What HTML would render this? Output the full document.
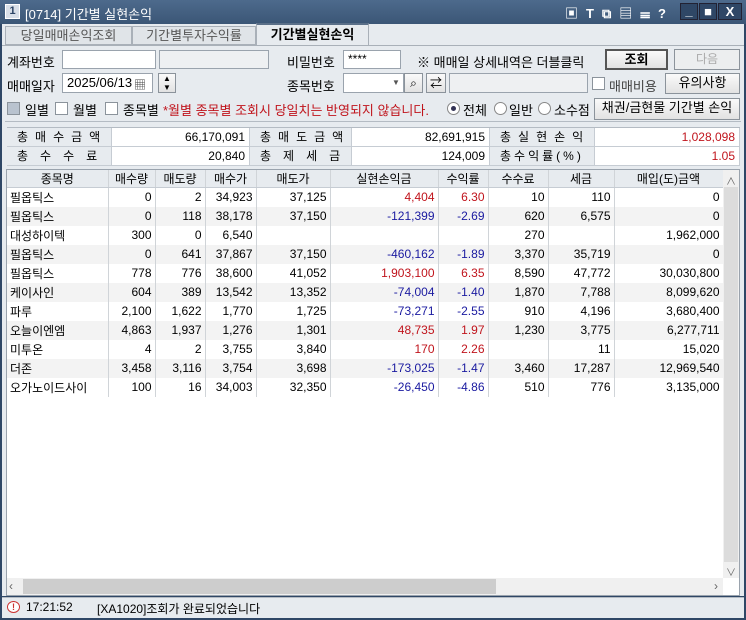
<!DOCTYPE html>
<html><head><meta charset="utf-8"><style>
*{box-sizing:border-box;margin:0;padding:0}
body{width:746px;height:620px;overflow:hidden;background:#2f4766;font-family:"Liberation Sans","Noto Sans CJK KR",sans-serif;font-size:12px;color:#000;position:relative}
.a{position:absolute;white-space:nowrap}
#title{left:0;top:0;width:746px;height:24px;background:linear-gradient(#4d6a8c,#3b5676);color:#fff;font-size:13px}
#main{left:2px;top:24px;width:742px;height:572px;background:#e7ebef}
.box{position:absolute;background:#fff;border:1px solid #9aa3ad}
.btn{position:absolute;background:linear-gradient(#fafafa,#e2e2e2);border:1px solid #8b939b;text-align:center;line-height:18px}
.cb{position:absolute;width:13px;height:13px;background:#fff;border:1px solid #8b939b}
.sum{position:absolute;height:19px;line-height:18px;border-right:1px solid #c6ccd3;border-bottom:1px solid #c6ccd3}
.lab{background:#e7ebef;letter-spacing:7px;padding-left:10px}
.val{background:#fff;text-align:right;padding-right:4px}
table{border-collapse:collapse;position:absolute;left:7px;top:170px;table-layout:fixed}
td,th{height:19px;border-right:1px solid #d0d4d8;padding:0 3px;font-weight:normal;font-size:12px;text-align:right;white-space:nowrap;overflow:hidden}
th{background:#e7ebef;text-align:center;height:17px;border-bottom:1px solid #c6ccd3}
td:first-child{text-align:left}
td{background:#fff}
tr.g td{background:#f3f3f3}
.r{color:#c0141c}.b{color:#1a1aa0}
</style></head><body>
<div id="title" class="a">
<div class="a" style="left:5px;top:4px;width:15px;height:15px;background:#d8dfe8;border:1px solid #fff;color:#2c4566;font-size:11px;text-align:center;line-height:13px;font-weight:bold">1</div>
<div class="a" style="left:25px;top:4px">[0714] 기간별 실현손익</div>
<div class="a" style="left:565px;top:3px;font-size:13px;font-weight:bold;letter-spacing:8px">▣T⧉▤☰?</div>
<div class="a" style="left:680px;top:3px;width:18px;height:17px;border:1px solid #223;background:#2f4766;color:#fff;text-align:center;font-weight:bold;line-height:14px">_</div>
<div class="a" style="left:699px;top:3px;width:18px;height:17px;border:1px solid #223;background:#2f4766;color:#fff;text-align:center;line-height:15px">■</div>
<div class="a" style="left:718px;top:3px;width:24px;height:17px;border:1px solid #223;background:#2f4766;color:#fff;text-align:center;font-weight:bold;line-height:15px">X</div>
</div>
<div id="main" class="a">
<div class="a" style="left:3px;top:2px;width:127px;height:19px;border:1px solid #a9b0b8;background:#e0e4e8;color:#555;text-align:center;line-height:18px;font-size:13px">당일매매손익조회</div>
<div class="a" style="left:130px;top:2px;width:124px;height:19px;border:1px solid #a9b0b8;background:#e0e4e8;color:#555;text-align:center;line-height:18px;font-size:13px">기간별투자수익률</div>
<div class="a" style="left:254px;top:-1px;width:113px;height:23px;border:1px solid #a9b0b8;border-top:2px solid #5a6f88;border-bottom:none;background:#e7ebef;text-align:center;line-height:20px;font-weight:bold;font-size:13px">기간별실현손익</div>
<div class="a" style="left:0;top:21px;width:742px;height:1px;background:#a9b0b8"></div>
<div class="a" style="left:5px;top:28px;font-size:13px">계좌번호</div>
<div class="box" style="left:60px;top:26px;width:94px;height:19px"></div>
<div class="box" style="left:157px;top:26px;width:110px;height:19px;background:#eef0f2"></div>
<div class="a" style="left:285px;top:28px;font-size:13px">비밀번호</div>
<div class="box" style="left:341px;top:26px;width:58px;height:19px;padding-left:4px;line-height:17px">****</div>
<div class="a" style="left:415px;top:28px;font-size:13px">※ 매매일 상세내역은 더블클릭</div>
<div class="btn" style="left:603px;top:25px;width:63px;height:21px;font-weight:bold;font-size:13px;border:2px solid #555">조회</div>
<div class="btn" style="left:672px;top:25px;width:66px;height:21px;color:#aaa;background:#eceeef">다음</div>
<div class="a" style="left:5px;top:52px;font-size:13px">매매일자</div>
<div class="box" style="left:60px;top:49px;width:91px;height:20px;padding-left:4px;line-height:18px;font-size:13px">2025/06/13</div>
<div class="a" style="left:132px;top:52px;font-size:12px;color:#444">▦</div>
<div class="btn" style="left:156px;top:49px;width:18px;height:20px;font-size:8px;line-height:9px">▲<br>▼</div>
<div class="a" style="left:285px;top:52px;font-size:13px">종목번호</div>
<div class="box" style="left:341px;top:49px;width:61px;height:20px"></div>
<div class="a" style="left:390px;top:54px;font-size:8px;color:#555">▼</div>
<div class="btn" style="left:402px;top:49px;width:19px;height:20px">⌕</div>
<div class="btn" style="left:424px;top:49px;width:20px;height:20px">⇄</div>
<div class="box" style="left:447px;top:49px;width:139px;height:20px;background:#eef0f2"></div>
<div class="cb" style="left:590px;top:53px"></div>
<div class="a" style="left:607px;top:52px;font-size:13px;color:#444">매매비용</div>
<div class="btn" style="left:663px;top:49px;width:75px;height:21px;font-size:13px">유의사항</div>
<div class="cb" style="left:5px;top:78px;background:#b9c3cf"></div>
<div class="a" style="left:23px;top:76px;font-size:13px">일별</div>
<div class="cb" style="left:53px;top:78px"></div>
<div class="a" style="left:71px;top:76px;font-size:13px">월별</div>
<div class="cb" style="left:103px;top:78px"></div>
<div class="a" style="left:121px;top:76px;font-size:13px">종목별</div>
<div class="a r" style="left:161px;top:76px;font-size:13px">*월별 종목별 조회시 당일치는 반영되지 않습니다.</div>
<div class="a" style="left:445px;top:78px;width:13px;height:13px;border-radius:50%;background:#fff;border:1px solid #888"><div class="a" style="left:3px;top:3px;width:5px;height:5px;border-radius:50%;background:#335"></div></div>
<div class="a" style="left:461px;top:76px;font-size:13px">전체</div>
<div class="a" style="left:492px;top:78px;width:13px;height:13px;border-radius:50%;background:#fff;border:1px solid #888"></div>
<div class="a" style="left:507px;top:76px;font-size:13px">일반</div>
<div class="a" style="left:536px;top:78px;width:13px;height:13px;border-radius:50%;background:#fff;border:1px solid #888"></div>
<div class="a" style="left:552px;top:76px;font-size:13px">소수점</div>
<div class="btn" style="left:592px;top:74px;width:146px;height:22px;font-size:13px">채권/금현물 기간별 손익</div>
<div class="a" style="left:3px;top:97px;width:736px;height:1px;background:#b4bbc3"></div>
</div>
<div class="a" style="left:7px;top:127px;width:733px;height:39px;border:1px solid #b4bbc3;background:#fff"></div>
<div class="sum lab a" style="left:7px;top:128px;width:105px">총매수금액</div>
<div class="sum val a" style="left:112px;top:128px;width:138px">66,170,091</div>
<div class="sum lab a" style="left:250px;top:128px;width:102px">총매도금액</div>
<div class="sum val a" style="left:352px;top:128px;width:138px">82,691,915</div>
<div class="sum lab a" style="left:490px;top:128px;width:105px">총실현손익</div>
<div class="sum val a r" style="left:595px;top:128px;width:145px">1,028,098</div>
<div class="sum lab a" style="left:7px;top:147px;width:105px;letter-spacing:12px">총수수료</div>
<div class="sum val a" style="left:112px;top:147px;width:138px">20,840</div>
<div class="sum lab a" style="left:250px;top:147px;width:102px;letter-spacing:12px">총제세금</div>
<div class="sum val a" style="left:352px;top:147px;width:138px">124,009</div>
<div class="sum lab a" style="left:490px;top:147px;width:105px;letter-spacing:3px">총수익률(%)</div>
<div class="sum val a r" style="left:595px;top:147px;width:145px">1.05</div>
<div class="a" style="left:6px;top:169px;width:734px;height:427px;border:1px solid #9aa3ad;background:#fff"></div>
<table>
<colgroup><col style="width:101px"><col style="width:47px"><col style="width:50px"><col style="width:51px"><col style="width:74px"><col style="width:108px"><col style="width:50px"><col style="width:60px"><col style="width:66px"><col style="width:109px"></colgroup>
<tr><th>종목명</th><th>매수량</th><th>매도량</th><th>매수가</th><th>매도가</th><th>실현손익금</th><th>수익률</th><th>수수료</th><th>세금</th><th>매입(도)금액</th></tr>
<tr><td>필옵틱스</td><td>0</td><td>2</td><td>34,923</td><td>37,125</td><td class="r">4,404</td><td class="r">6.30</td><td>10</td><td>110</td><td>0</td></tr>
<tr class="g"><td>필옵틱스</td><td>0</td><td>118</td><td>38,178</td><td>37,150</td><td class="b">-121,399</td><td class="b">-2.69</td><td>620</td><td>6,575</td><td>0</td></tr>
<tr><td>대성하이텍</td><td>300</td><td>0</td><td>6,540</td><td></td><td></td><td></td><td>270</td><td></td><td>1,962,000</td></tr>
<tr class="g"><td>필옵틱스</td><td>0</td><td>641</td><td>37,867</td><td>37,150</td><td class="b">-460,162</td><td class="b">-1.89</td><td>3,370</td><td>35,719</td><td>0</td></tr>
<tr><td>필옵틱스</td><td>778</td><td>776</td><td>38,600</td><td>41,052</td><td class="r">1,903,100</td><td class="r">6.35</td><td>8,590</td><td>47,772</td><td>30,030,800</td></tr>
<tr class="g"><td>케이사인</td><td>604</td><td>389</td><td>13,542</td><td>13,352</td><td class="b">-74,004</td><td class="b">-1.40</td><td>1,870</td><td>7,788</td><td>8,099,620</td></tr>
<tr><td>파루</td><td>2,100</td><td>1,622</td><td>1,770</td><td>1,725</td><td class="b">-73,271</td><td class="b">-2.55</td><td>910</td><td>4,196</td><td>3,680,400</td></tr>
<tr class="g"><td>오늘이엔엠</td><td>4,863</td><td>1,937</td><td>1,276</td><td>1,301</td><td class="r">48,735</td><td class="r">1.97</td><td>1,230</td><td>3,775</td><td>6,277,711</td></tr>
<tr><td>미투온</td><td>4</td><td>2</td><td>3,755</td><td>3,840</td><td class="r">170</td><td class="r">2.26</td><td></td><td>11</td><td>15,020</td></tr>
<tr class="g"><td>더존</td><td>3,458</td><td>3,116</td><td>3,754</td><td>3,698</td><td class="b">-173,025</td><td class="b">-1.47</td><td>3,460</td><td>17,287</td><td>12,969,540</td></tr>
<tr><td>오가노이드사이</td><td>100</td><td>16</td><td>34,003</td><td>32,350</td><td class="b">-26,450</td><td class="b">-4.86</td><td>510</td><td>776</td><td>3,135,000</td></tr>
</table>
<div class="a" style="left:723px;top:170px;width:16px;height:408px;background:#f0f0f0"></div>
<div class="a" style="left:726px;top:173px;color:#666;font-size:10px">∧</div>
<div class="a" style="left:724px;top:187px;width:14px;height:375px;background:#dcdcdc"></div>
<div class="a" style="left:726px;top:564px;color:#666;font-size:10px">∨</div>
<div class="a" style="left:7px;top:578px;width:716px;height:17px;background:#f0f0f0"></div>
<div class="a" style="left:9px;top:579px;color:#666;font-size:12px">‹</div>
<div class="a" style="left:23px;top:579px;width:473px;height:15px;background:#cdcdcd"></div>
<div class="a" style="left:714px;top:579px;color:#666;font-size:12px">›</div>
<div class="a" style="left:2px;top:597px;width:742px;height:21px;background:#e7ebef;border-top:1px solid #b4bbc3"></div>
<div class="a" style="left:7px;top:601px;width:13px;height:12px;border-radius:50%;background:#fff;border:1px solid #c33;color:#c33;font-size:9px;text-align:center;line-height:10px;font-weight:bold">!</div>
<div class="a" style="left:26px;top:600px">17:21:52</div>
<div class="a" style="left:97px;top:600px">[XA1020]조회가 완료되었습니다</div>
</body></html>
